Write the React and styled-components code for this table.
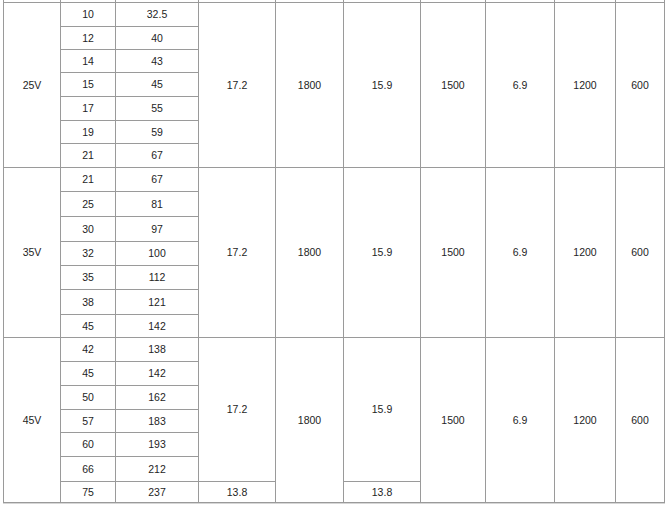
import React from 'react';
import styled, { createGlobalStyle } from 'styled-components';

const GlobalStyle = createGlobalStyle`
  html, body {
    margin: 0;
    padding: 0;
    background: #ffffff;
  }
  body {
    font-family: "Liberation Sans", Arial, Helvetica, sans-serif;
  }
`;

const Page = styled.div`
  width: 668px;
  height: 506px;
  overflow: hidden;
  background: #ffffff;
  padding-left: 3px;
  box-sizing: border-box;
`;

// the gap shows the grid background, which draws the rules
const Sheet = styled.div`
  display: grid;
  grid-template-columns: 56px 54px 82px 76px 67px 76px 64px 68px 60px 48px;
  grid-template-rows: ${({ rows }) => rows};
  gap: 1px;
  width: max-content;
  padding: 0 1px 1px 1px;
  background: #9a9a9a;
  border-bottom: 1px solid #d6d6d6;
`;

const Cell = styled.div`
  grid-row: span ${({ span }) => span || 1};
  display: flex;
  align-items: center;
  justify-content: center;
  background: #ffffff;
  color: #1e1e1e;
  font-size: 10.5px;
  line-height: 1;
`;

const blocks = [
  {
    volt: '25V',
    pairs: [['10', '32.5'], ['12', '40'], ['14', '43'], ['15', '45'], ['17', '55'], ['19', '59'], ['21', '67']],
    tail: null,
    heights: [23, 22, 22, 23, 23, 22, 23],
  },
  {
    volt: '35V',
    pairs: [['21', '67'], ['25', '81'], ['30', '97'], ['32', '100'], ['35', '112'], ['38', '121'], ['45', '142']],
    tail: null,
    heights: [23, 24, 24, 23, 23, 24, 22],
  },
  {
    volt: '45V',
    pairs: [['42', '138'], ['45', '142'], ['50', '162'], ['57', '183'], ['60', '193'], ['66', '212'], ['75', '237']],
    tail: '13.8',
    heights: [23, 23, 23, 22, 23, 24, 20],
  },
];

const rowSizes = ['2px', ...blocks.flatMap((b) => b.heights.map((h) => `${h}px`))].join(' ');

const Block = ({ volt, pairs, tail }) => {
  const n = pairs.length;
  const top = tail ? n - 1 : n;
  return (
    <>
      {pairs.map(([a, b], i) => (
        <React.Fragment key={i}>
          {i === 0 && <Cell span={n}>{volt}</Cell>}
          <Cell>{a}</Cell>
          <Cell>{b}</Cell>
          {i === 0 && (
            <>
              <Cell span={top}>17.2</Cell>
              <Cell span={n}>1800</Cell>
              <Cell span={top}>15.9</Cell>
              <Cell span={n}>1500</Cell>
              <Cell span={n}>6.9</Cell>
              <Cell span={n}>1200</Cell>
              <Cell span={n}>600</Cell>
            </>
          )}
          {tail && i === n - 1 && (
            <>
              <Cell>{tail}</Cell>
              <Cell>{tail}</Cell>
            </>
          )}
        </React.Fragment>
      ))}
    </>
  );
};

export default function App() {
  return (
    <Page>
      <GlobalStyle />
      <Sheet rows={rowSizes}>
        {Array.from({ length: 10 }).map((_, i) => (
          <Cell key={`h${i}`} />
        ))}
        {blocks.map((b) => (
          <Block key={b.volt} {...b} />
        ))}
      </Sheet>
    </Page>
  );
}
